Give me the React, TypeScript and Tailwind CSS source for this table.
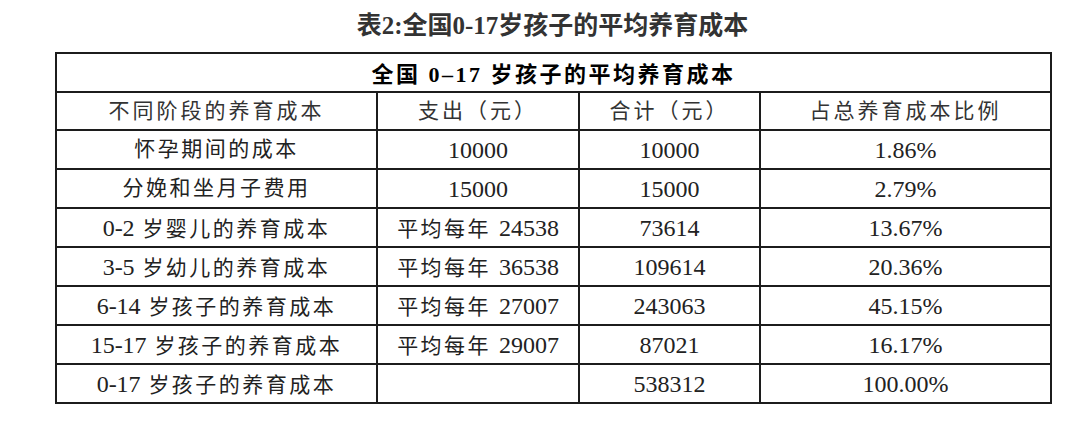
const rows: [string, string, string, string][] = [
  ['怀孕期间的成本', '10000', '10000', '1.86%'],
  ['分娩和坐月子费用', '15000', '15000', '2.79%'],
  ['0-2 岁婴儿的养育成本', '平均每年 24538', '73614', '13.67%'],
  ['3-5 岁幼儿的养育成本', '平均每年 36538', '109614', '20.36%'],
  ['6-14 岁孩子的养育成本', '平均每年 27007', '243063', '45.15%'],
  ['15-17 岁孩子的养育成本', '平均每年 29007', '87021', '16.17%'],
  ['0-17 岁孩子的养育成本', '', '538312', '100.00%'],
]

const cell = 'border-2 border-[#1c1c1c] text-center p-0 whitespace-nowrap'

// digits look like SimSun's tall half-width numerals, so they get a bigger size and no tracking
function Mixed({ text }: { text: string }) {
  const parts = text.split(/([0-9.%\-–]+)/).filter((p) => p !== '')
  return (
    <>
      {parts.map((p, i) =>
        /^[0-9.%\-–]+$/.test(p) ? (
          <span key={i} className="text-[24px] tracking-[0px]">
            {p}
          </span>
        ) : (
          <span key={i} className="text-[21px] tracking-[2.5px]">
            {p}
          </span>
        ),
      )}
    </>
  )
}

export default function App() {
  return (
    <div className="w-[1080px] h-[429px] bg-white overflow-hidden font-['Liberation_Serif','Noto_Sans_CJK_SC',serif]">
      <div className="ml-[55px] w-[995px]">
        <div className="h-[46px] flex items-end justify-center pb-[8px] text-[25px] font-bold text-[#333] leading-none">
          表2:全国0-17岁孩子的平均养育成本
        </div>
        <table className="mt-[6px] w-[995px] border-collapse table-fixed text-[#222] leading-none">
          <colgroup>
            <col className="w-[321px]" />
            <col className="w-[202px]" />
            <col className="w-[181px]" />
            <col className="w-[291px]" />
          </colgroup>
          <tbody>
            <tr className="h-[39px]">
              <td colSpan={4} className={`${cell} text-[22px] font-bold tracking-[2.5px] text-black pt-[4px]`}>
                全国 0–17 岁孩子的平均养育成本
              </td>
            </tr>
            <tr className="h-[38px] text-[21px] tracking-[3px] text-[#333]">
              <td className={cell}>不同阶段的养育成本</td>
              <td className={cell}>支出（元）</td>
              <td className={cell}>合计（元）</td>
              <td className={cell}>占总养育成本比例</td>
            </tr>
            {rows.map((r) => (
              <tr key={r[0]} className="h-[39px]">
                {r.map((v, i) => (
                  <td key={i} className={cell}>
                    <Mixed text={v} />
                  </td>
                ))}
              </tr>
            ))}
          </tbody>
        </table>
      </div>
    </div>
  )
}
